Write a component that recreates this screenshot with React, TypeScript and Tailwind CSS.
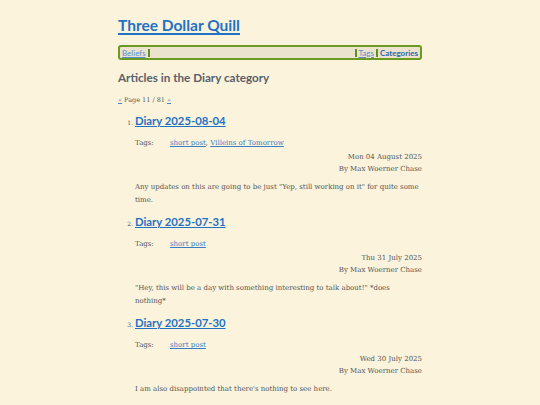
const serif = { fontFamily: '"DejaVu Serif", serif' }

const posts = [
  {
    title: 'Diary 2025-08-04',
    tags: ['short post', 'Villeins of Tomorrow'],
    date: 'Mon 04 August 2025',
    excerpt: 'Any updates on this are going to be just "Yep, still working on it" for quite some time.',
  },
  {
    title: 'Diary 2025-07-31',
    tags: ['short post'],
    date: 'Thu 31 July 2025',
    excerpt: '"Hey, this will be a day with something interesting to talk about!" *does nothing*',
  },
  {
    title: 'Diary 2025-07-30',
    tags: ['short post'],
    date: 'Wed 30 July 2025',
    excerpt: "I am also disappointed that there's nothing to see here.",
  },
]

export default function App() {
  return (
    <div className="min-h-screen bg-[#fbf3dc] font-['Lato',sans-serif]">
      <div className="mx-auto w-[304px] pt-[14px]">
        <h1 className="text-[15.5px] font-bold leading-[22px] text-[#1f72c4] underline decoration-[1.5px] underline-offset-2">
          <a href="#">Three Dollar Quill</a>
        </h1>

        <nav className="mt-[9px] flex h-[15px] items-center rounded-[3px] border-2 border-[#6a9a22] bg-[#ebe3cd] px-[2px] text-[8px] leading-none">
          <a href="#" className="border-r-2 border-[#5f8f1c] pr-[2px] text-[#5a8fcc] underline">
            Beliefs
          </a>
          <span className="flex-1" />
          <a href="#" className="border-l-2 border-[#5f8f1c] px-[2px] text-[#5a8fcc] underline">
            Tags
          </a>
          <a href="#" className="border-l-2 border-[#5f8f1c] pl-[2px] font-bold text-[#2a68ae]">
            Categories
          </a>
        </nav>

        <h2 className="mt-[9px] text-[11.7px] font-bold leading-[16px] text-[#58606a]">
          Articles in the Diary category
        </h2>

        <p className="mt-[10px] text-[6.5px] leading-[10px] text-[#555]" style={serif}>
          <a href="#" className="text-[#4a86c8] underline">«</a> Page 11 / 81{' '}
          <a href="#" className="text-[#4a86c8] underline">»</a>
        </p>

        <ol className="mt-[8px] list-decimal pl-[17px] text-[7px] text-[#545454]" style={serif}>
          {posts.map((post) => (
            <li key={post.title} className="mb-[7px] marker:text-[6px]">
              <a
                href="#"
                className="font-['Lato',sans-serif] text-[11.3px] font-bold leading-[16px] text-[#1f72c4] underline decoration-[1.2px]"
              >
                {post.title}
              </a>
              <div className="mt-[8px] flex leading-[12px]">
                <span className="w-[35px]">Tags:</span>
                <span>
                  {post.tags.map((tag, i) => (
                    <span key={tag}>
                      {i > 0 && ', '}
                      <a href="#" className="text-[#3b7cc2] underline">
                        {tag}
                      </a>
                    </span>
                  ))}
                </span>
              </div>
              <div className="mt-[2px] text-right leading-[12px]">
                <div>{post.date}</div>
                <div>By Max Woerner Chase</div>
              </div>
              <p className="mt-[6px] leading-[13px]">{post.excerpt}</p>
            </li>
          ))}
        </ol>
      </div>
    </div>
  )
}
